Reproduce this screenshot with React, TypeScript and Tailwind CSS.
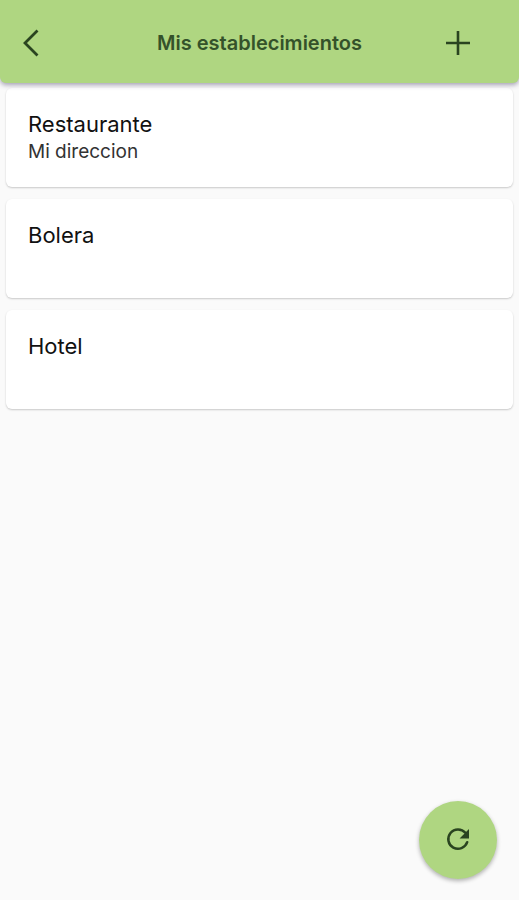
import React from 'react';

interface Establishment {
    name: string;
    address?: string;
}

const establishments: Establishment[] = [
    { name: 'Restaurante', address: 'Mi direccion' },
    { name: 'Bolera' },
    { name: 'Hotel' },
];

const EstablishmentCard: React.FC<Establishment> = ({ name, address }) => {
    return (
        <li className="min-h-[99px] px-[22px] pt-[22px] bg-white rounded-md shadow-[0_1px_2px_rgba(0,0,0,0.2)]">
            <h2 className="text-[22px] leading-7 text-[#111111]">{name}</h2>
            {address && <p className="text-[19px] leading-7 text-[#333333]">{address}</p>}
        </li>
    );
};

const App: React.FC = () => {
    return (
        <div className="min-h-screen bg-[#fafafa] font-['Inter','Roboto',sans-serif]">
            <header className="relative grid grid-cols-[122px_1fr_122px] items-center h-[83px] pt-[3px] bg-[#afd681] text-[#34522a] rounded-b-md shadow-[0_2px_5px_rgba(60,50,90,0.45)]">
                <button type="button" aria-label="Volver" className="justify-self-start ml-4 p-1 text-[#2a4420]">
                    <svg width="22" height="28" viewBox="0 0 22 28" fill="none" stroke="currentColor" strokeWidth="2.8">
                        <path d="M17.5 1.5 5 14l12.5 12.5" />
                    </svg>
                </button>
                <h1 className="text-center text-[20px] leading-6 font-semibold whitespace-nowrap">
                    Mis establecimientos
                </h1>
                <button type="button" aria-label="Añadir establecimiento" className="justify-self-center p-1 text-[#2a4420]">
                    <svg width="24" height="24" viewBox="0 0 24 24" fill="none" stroke="currentColor" strokeWidth="2.6">
                        <path d="M12 0v24M0 12h24" />
                    </svg>
                </button>
            </header>
            <main>
                <ul className="flex flex-col gap-3 px-1.5 pt-[5px]">
                    {establishments.map((item) => (
                        <EstablishmentCard key={item.name} name={item.name} address={item.address} />
                    ))}
                </ul>
            </main>
            <button
                type="button"
                aria-label="Actualizar"
                className="fixed right-[22px] bottom-[21px] flex items-center justify-center size-[78px] rounded-full bg-[#afd681] text-[#2a4420] shadow-[0_2px_4px_rgba(0,0,0,0.3)]"
            >
                <svg width="24" height="24" viewBox="0 0 24 24" fill="none">
                    <path
                        d="M21.2 14.2A9.7 9.7 0 1 1 19.4 4.8"
                        stroke="currentColor"
                        strokeWidth="2.5"
                        strokeLinecap="round"
                    />
                    <path d="M23 1v9.6h-9.4z" fill="currentColor" />
                </svg>
            </button>
        </div>
    );
};

export default App;
